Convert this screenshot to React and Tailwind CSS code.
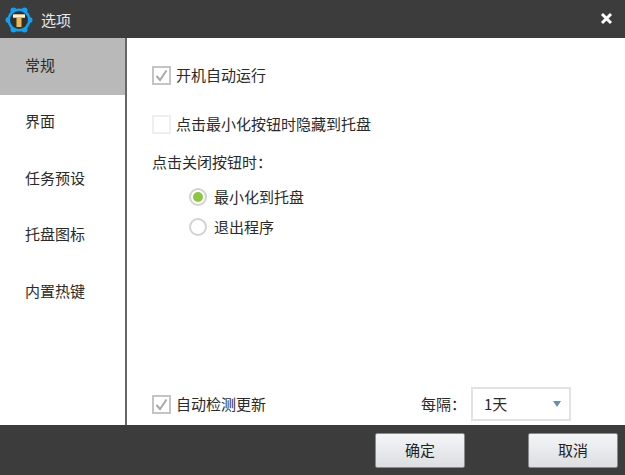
import React from 'react';

const font = { fontFamily: '"Noto Sans CJK SC", "Liberation Sans", sans-serif' };

const navItems = ['常规', '界面', '任务预设', '托盘图标', '内置热键'];

const Logo = () => (
  <svg width="34" height="34" viewBox="0 0 34 34">
    <g fill="#0ea2f6">
      <circle cx="17" cy="17" r="11.5" />
      <circle cx="27.5" cy="17" r="3" />
      <circle cx="6.5" cy="17" r="3" />
      <circle cx="11.5" cy="7.5" r="3" />
      <circle cx="22.5" cy="7.5" r="3" />
      <circle cx="11.5" cy="26.5" r="3" />
      <circle cx="22.5" cy="26.5" r="3" />
    </g>
    <circle cx="17" cy="17" r="9" fill="#33302c" />
    <path d="M11 11.5 H23 V15 H19.5 V24 H14.5 V15 H11 Z" fill="#f2b950" />
    <path d="M11 11.5 H23 V14 H11 Z" fill="#fdf1d8" />
  </svg>
);

const Check = ({ checked }) => (
  <span
    className={`w-[19px] h-[19px] flex items-center justify-center border-2 shrink-0 bg-white ${
      checked ? 'border-[#c4c4c4]' : 'border-[#edf0f3]'
    }`}
  >
    {checked && (
      <svg width="15" height="15" viewBox="0 0 15 15">
        <path d="M2.5 8 L6 12 L12.5 2.5" fill="none" stroke="#a9a9a9" strokeWidth="2" />
      </svg>
    )}
  </span>
);

const Radio = ({ checked }) => (
  <span className="w-[18px] h-[18px] rounded-full border-2 border-[#d2d2d2] bg-white flex items-center justify-center shrink-0">
    {checked && <span className="w-[10px] h-[10px] rounded-full bg-[#8dc63f]" />}
  </span>
);

const Button = ({ children }) => (
  <button className="w-[90px] h-[35px] rounded-[2px] border border-[#8a8a8a] bg-gradient-to-b from-[#f4f5f7] to-[#dcdee2] text-[15px] text-[#222]">
    {children}
  </button>
);

const App = () => {
  return (
    <div className="w-[625px] h-[475px] flex flex-col bg-white text-[15px] text-[#2a2a2a] overflow-hidden" style={font}>
      <div className="h-[38px] bg-[#3c3c3c] flex items-center pt-[2px] pl-[2px] pr-[12px] shrink-0">
        <Logo />
        <span className="ml-[5px] text-[#e8e8e8]">选项</span>
        <svg className="ml-auto mb-[4px]" width="13" height="13" viewBox="0 0 13 13">
          <path d="M2 2 L11 11 M11 2 L2 11" stroke="#fff" strokeWidth="3" />
        </svg>
      </div>

      <div className="flex-1 flex min-h-0">
        <div className="w-[127px] shrink-0 border-r-2 border-[#666666]">
          {navItems.map((item, i) => (
            <div
              key={item}
              className={`h-[56.5px] flex items-center pl-[25px] pb-[3px] ${i === 0 ? 'bg-[#b9b9b9]' : ''}`}
            >
              {item}
            </div>
          ))}
        </div>

        <div className="flex-1 flex flex-col pl-[25px] pt-[27px] pb-[4px]">
          <label className="flex items-center gap-[5px] h-[20px]">
            <Check checked />
            开机自动运行
          </label>
          <label className="flex items-center gap-[5px] h-[20px] mt-[29px]">
            <Check />
            点击最小化按钮时隐藏到托盘
          </label>
          <div className="h-[20px] mt-[18px] leading-[20px]">点击关闭按钮时：</div>
          <div className="flex items-center gap-[7px] h-[20px] mt-[15px] ml-[37px]">
            <Radio checked />
            最小化到托盘
          </div>
          <div className="flex items-center gap-[7px] h-[20px] mt-[10px] ml-[37px]">
            <Radio />
            退出程序
          </div>

          <div className="mt-auto flex items-center pr-[54px]">
            <label className="flex items-center gap-[5px]">
              <Check checked />
              自动检测更新
            </label>
            <span className="ml-auto">每隔：</span>
            <div className="ml-[5px] w-[100px] h-[34px] border-2 border-[#e2e2e2] flex items-center pl-[11px] pr-[8px]">
              1天
              <span className="ml-auto w-0 h-0 border-x-[4px] border-x-transparent border-t-[6px] border-t-[#6b8ea8]" />
            </div>
          </div>
        </div>
      </div>

      <div className="h-[50px] bg-[#3c3c3c] shrink-0 flex items-center justify-end gap-[63px] pr-[7px]">
        <Button>确定</Button>
        <Button>取消</Button>
      </div>
    </div>
  );
};

export default App;
